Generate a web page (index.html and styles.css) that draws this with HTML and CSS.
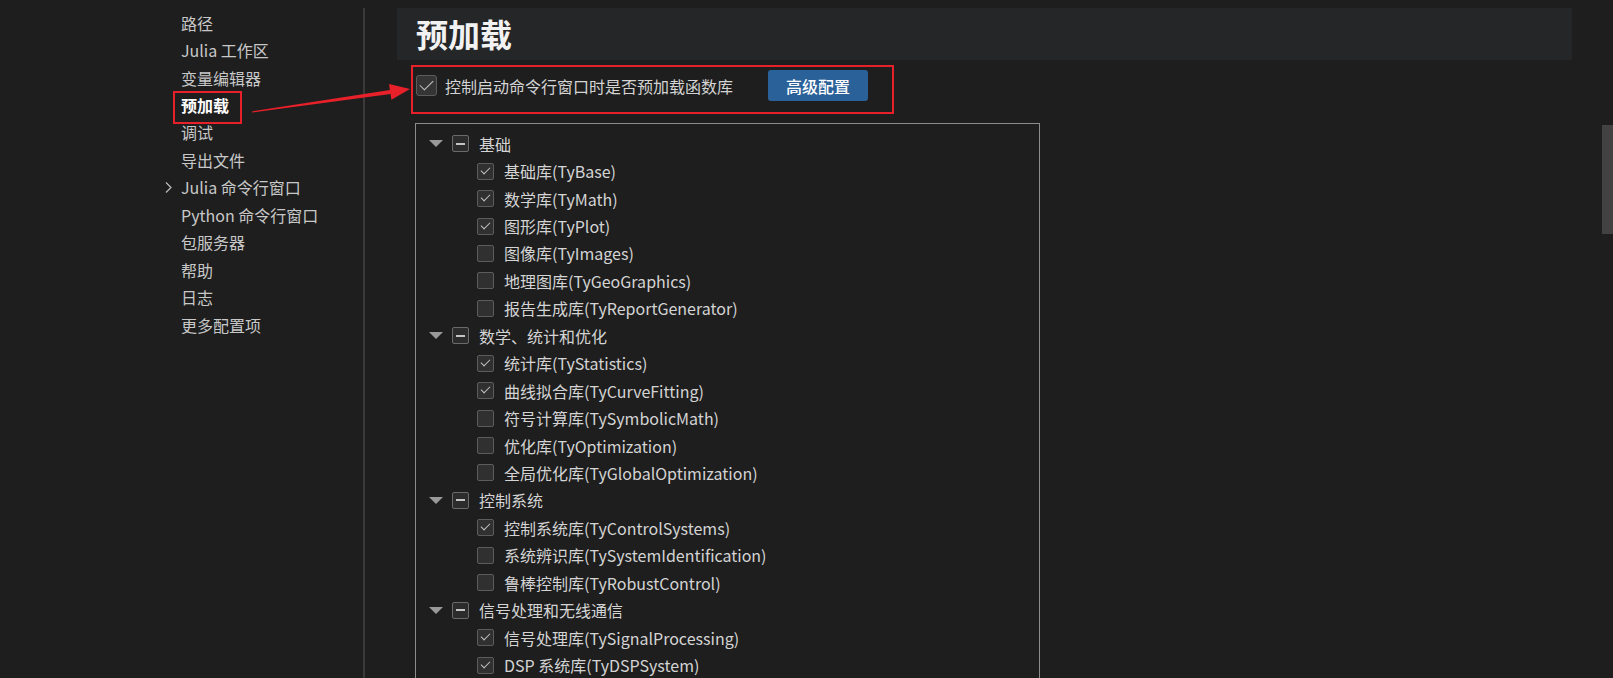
FILE: index.html
```html
<!doctype html>
<html lang="zh-CN">
  <head>
    <meta charset="UTF-8" />
    <meta name="viewport" content="width=device-width, initial-scale=1.0" />
    <title>设置 - 预加载</title>
    <link rel="stylesheet" href="styles.css">
  </head>
  <body>
    <!-- Settings navigation -->
    <nav class="sidebar">
      <ul class="nav-list">
        <li class="nav-item"><span class="nav-icon"></span>路径</li>
        <li class="nav-item"><span class="nav-icon"></span>Julia 工作区</li>
        <li class="nav-item"><span class="nav-icon"></span>变量编辑器</li>
        <li class="nav-item active"><span class="nav-icon"></span>预加载</li>
        <li class="nav-item"><span class="nav-icon"></span>调试</li>
        <li class="nav-item"><span class="nav-icon"></span>导出文件</li>
        <li class="nav-item">
          <span class="nav-icon">
            <svg viewBox="0 0 7 11" width="7" height="11" fill="none" stroke="currentColor" stroke-width="1.2">
              <polyline points="1,0.5 6,5.5 1,10.5"></polyline>
            </svg>
          </span>Julia 命令行窗口
        </li>
        <li class="nav-item"><span class="nav-icon"></span>Python 命令行窗口</li>
        <li class="nav-item"><span class="nav-icon"></span>包服务器</li>
        <li class="nav-item"><span class="nav-icon"></span>帮助</li>
        <li class="nav-item"><span class="nav-icon"></span>日志</li>
        <li class="nav-item"><span class="nav-icon"></span>更多配置项</li>
      </ul>
    </nav>

    <main class="content">
      <header class="page-header">
        <h1>预加载</h1>
      </header>

      <div class="highlight">
        <div class="option">
          <span class="box box-lg checked"></span>
          <span class="option-label">控制启动命令行窗口时是否预加载函数库</span>
          <button class="btn">高级配置</button>
        </div>
      </div>

      <div class="tree">
        <div class="tree-row group"><span class="caret"></span><span class="box mixed"></span>基础</div>
        <div class="tree-row child"><span class="box checked"></span>基础库(TyBase)</div>
        <div class="tree-row child"><span class="box checked"></span>数学库(TyMath)</div>
        <div class="tree-row child"><span class="box checked"></span>图形库(TyPlot)</div>
        <div class="tree-row child"><span class="box"></span>图像库(TyImages)</div>
        <div class="tree-row child"><span class="box"></span>地理图库(TyGeoGraphics)</div>
        <div class="tree-row child"><span class="box"></span>报告生成库(TyReportGenerator)</div>

        <div class="tree-row group"><span class="caret"></span><span class="box mixed"></span>数学、统计和优化</div>
        <div class="tree-row child"><span class="box checked"></span>统计库(TyStatistics)</div>
        <div class="tree-row child"><span class="box checked"></span>曲线拟合库(TyCurveFitting)</div>
        <div class="tree-row child"><span class="box"></span>符号计算库(TySymbolicMath)</div>
        <div class="tree-row child"><span class="box"></span>优化库(TyOptimization)</div>
        <div class="tree-row child"><span class="box"></span>全局优化库(TyGlobalOptimization)</div>

        <div class="tree-row group"><span class="caret"></span><span class="box mixed"></span>控制系统</div>
        <div class="tree-row child"><span class="box checked"></span>控制系统库(TyControlSystems)</div>
        <div class="tree-row child"><span class="box"></span>系统辨识库(TySystemIdentification)</div>
        <div class="tree-row child"><span class="box"></span>鲁棒控制库(TyRobustControl)</div>

        <div class="tree-row group"><span class="caret"></span><span class="box mixed"></span>信号处理和无线通信</div>
        <div class="tree-row child"><span class="box checked"></span>信号处理库(TySignalProcessing)</div>
        <div class="tree-row child"><span class="box checked"></span>DSP 系统库(TyDSPSystem)</div>
      </div>
    </main>

    <div class="scrollbar"><div class="scroll-thumb"></div></div>

    <!-- Callout arrow from the nav entry to the option -->
    <svg class="callout-arrow" viewBox="0 0 180 40" width="180" height="40">
      <polygon points="11.9,33.4 149.9,11.9 149,6 170,11 151.4,21.8 150.5,15.9 12.1,34.6"></polygon>
    </svg>
  </body>
</html>
```

FILE: styles.css
```css
:root {
  --color-bg: #1e1e1e;
  --color-panel: #252628;
  --color-text: #d4d4d4;
  --color-text-alt: #c8c8c8;
  --color-divider: #3a3a3a;
  --color-primary: #2b6199;
  --color-mark: #e8202a;
  --row-height: 27.45px;
}

html,
body {
  height: 100%;
}

body {
  margin: 0;
  background-color: var(--color-bg);
  color: var(--color-text);
  font-family: 'Noto Sans CJK SC', 'Noto Sans', sans-serif;
  font-size: 16px;
  display: flex;
  overflow: hidden;
  position: relative;
}

/* Sidebar */
.sidebar {
  width: 365px;
  box-sizing: border-box;
  margin-top: 8px;
  padding: 1px 0 0 160px;
  border-right: 2px solid var(--color-divider);
  flex-shrink: 0;
}

.nav-list {
  list-style: none;
  margin: 0;
  padding: 0;
}

.nav-item {
  position: relative;
  height: var(--row-height);
  display: flex;
  align-items: center;
  color: var(--color-text-alt);
  white-space: nowrap;
}

.nav-icon {
  width: 21px;
  display: flex;
  align-items: center;
  padding-left: 5px;
  box-sizing: border-box;
  color: #bdbdbd;
}

.nav-item.active {
  color: #ffffff;
  font-weight: bold;
}

.nav-item.active::after {
  content: '';
  position: absolute;
  left: 13px;
  top: 0;
  width: 69px;
  height: 33px;
  box-sizing: border-box;
  border: 2px solid var(--color-mark);
}

/* Main panel */
.content {
  flex: 1;
  display: flex;
  flex-direction: column;
  padding: 8px 30px 0 32px;
  min-width: 0;
  min-height: 0;
}

.page-header {
  flex-shrink: 0;
  height: 52px;
  background-color: var(--color-panel);
  display: flex;
  align-items: center;
  padding-left: 19px;
}

.page-header h1 {
  margin: 0;
  font-size: 32px;
  font-weight: bold;
  color: #f2f2f2;
  line-height: 1;
  padding-bottom: 2px;
}

.highlight {
  flex-shrink: 0;
  margin: 5px 0 0 14px;
  width: 483px;
  height: 49px;
  box-sizing: border-box;
  border: 2px solid var(--color-mark);
  padding: 3px 0 0 3px;
}

.option {
  display: flex;
  align-items: center;
  height: 31px;
}

.option-label {
  margin-left: 8px;
  color: var(--color-text);
  white-space: nowrap;
}

.btn {
  margin-left: 35px;
  width: 100px;
  height: 31px;
  border: none;
  border-radius: 3px;
  background-color: var(--color-primary);
  color: #ffffff;
  font-family: inherit;
  font-size: 16px;
  font-weight: 500;
  cursor: pointer;
}

/* Checkboxes */
.box {
  position: relative;
  width: 17px;
  height: 17px;
  box-sizing: border-box;
  border: 1px solid #5c5c5c;
  border-radius: 2px;
  background-color: #303030;
  margin-right: 10px;
  flex-shrink: 0;
}

.box.checked::after {
  content: '';
  position: absolute;
  left: 3px;
  top: 3px;
  width: 8px;
  height: 4px;
  border-left: 1px solid #c4c4c4;
  border-bottom: 1px solid #c4c4c4;
  transform: rotate(-45deg);
}

.box.mixed {
  border-color: #6a6a6a;
  background-color: #2c2c2c;
}

.box.mixed::after {
  content: '';
  position: absolute;
  left: 3px;
  top: 6.5px;
  width: 9px;
  height: 2px;
  background-color: #c4c4c4;
}

.box-lg {
  width: 21px;
  height: 21px;
  border-radius: 3px;
  margin-right: 0;
  background-color: #353535;
}

.box-lg.checked::after {
  left: 3px;
  top: 4px;
  width: 12px;
  height: 6px;
}

/* Library tree */
.tree {
  flex: 1;
  min-height: 0;
  overflow: hidden;
  margin: 9px 0 0 18px;
  width: 625px;
  box-sizing: border-box;
  border: 1px solid #8c8c8c;
  border-bottom: none;
  padding-top: 6px;
}

.tree-row {
  height: var(--row-height);
  display: flex;
  align-items: center;
  white-space: nowrap;
}

.tree-row.group {
  padding-left: 13px;
}

.tree-row.child {
  padding-left: 61px;
}

.caret {
  width: 0;
  height: 0;
  border-left: 7px solid transparent;
  border-right: 7px solid transparent;
  border-top: 7px solid #9a9a9a;
  margin-right: 9px;
}

/* Window scrollbar */
.scrollbar {
  width: 11px;
  flex-shrink: 0;
}

.scroll-thumb {
  margin-top: 125px;
  height: 109px;
  background-color: #424242;
}

.callout-arrow {
  position: absolute;
  left: 240px;
  top: 78px;
  fill: var(--color-mark);
  pointer-events: none;
}
```
